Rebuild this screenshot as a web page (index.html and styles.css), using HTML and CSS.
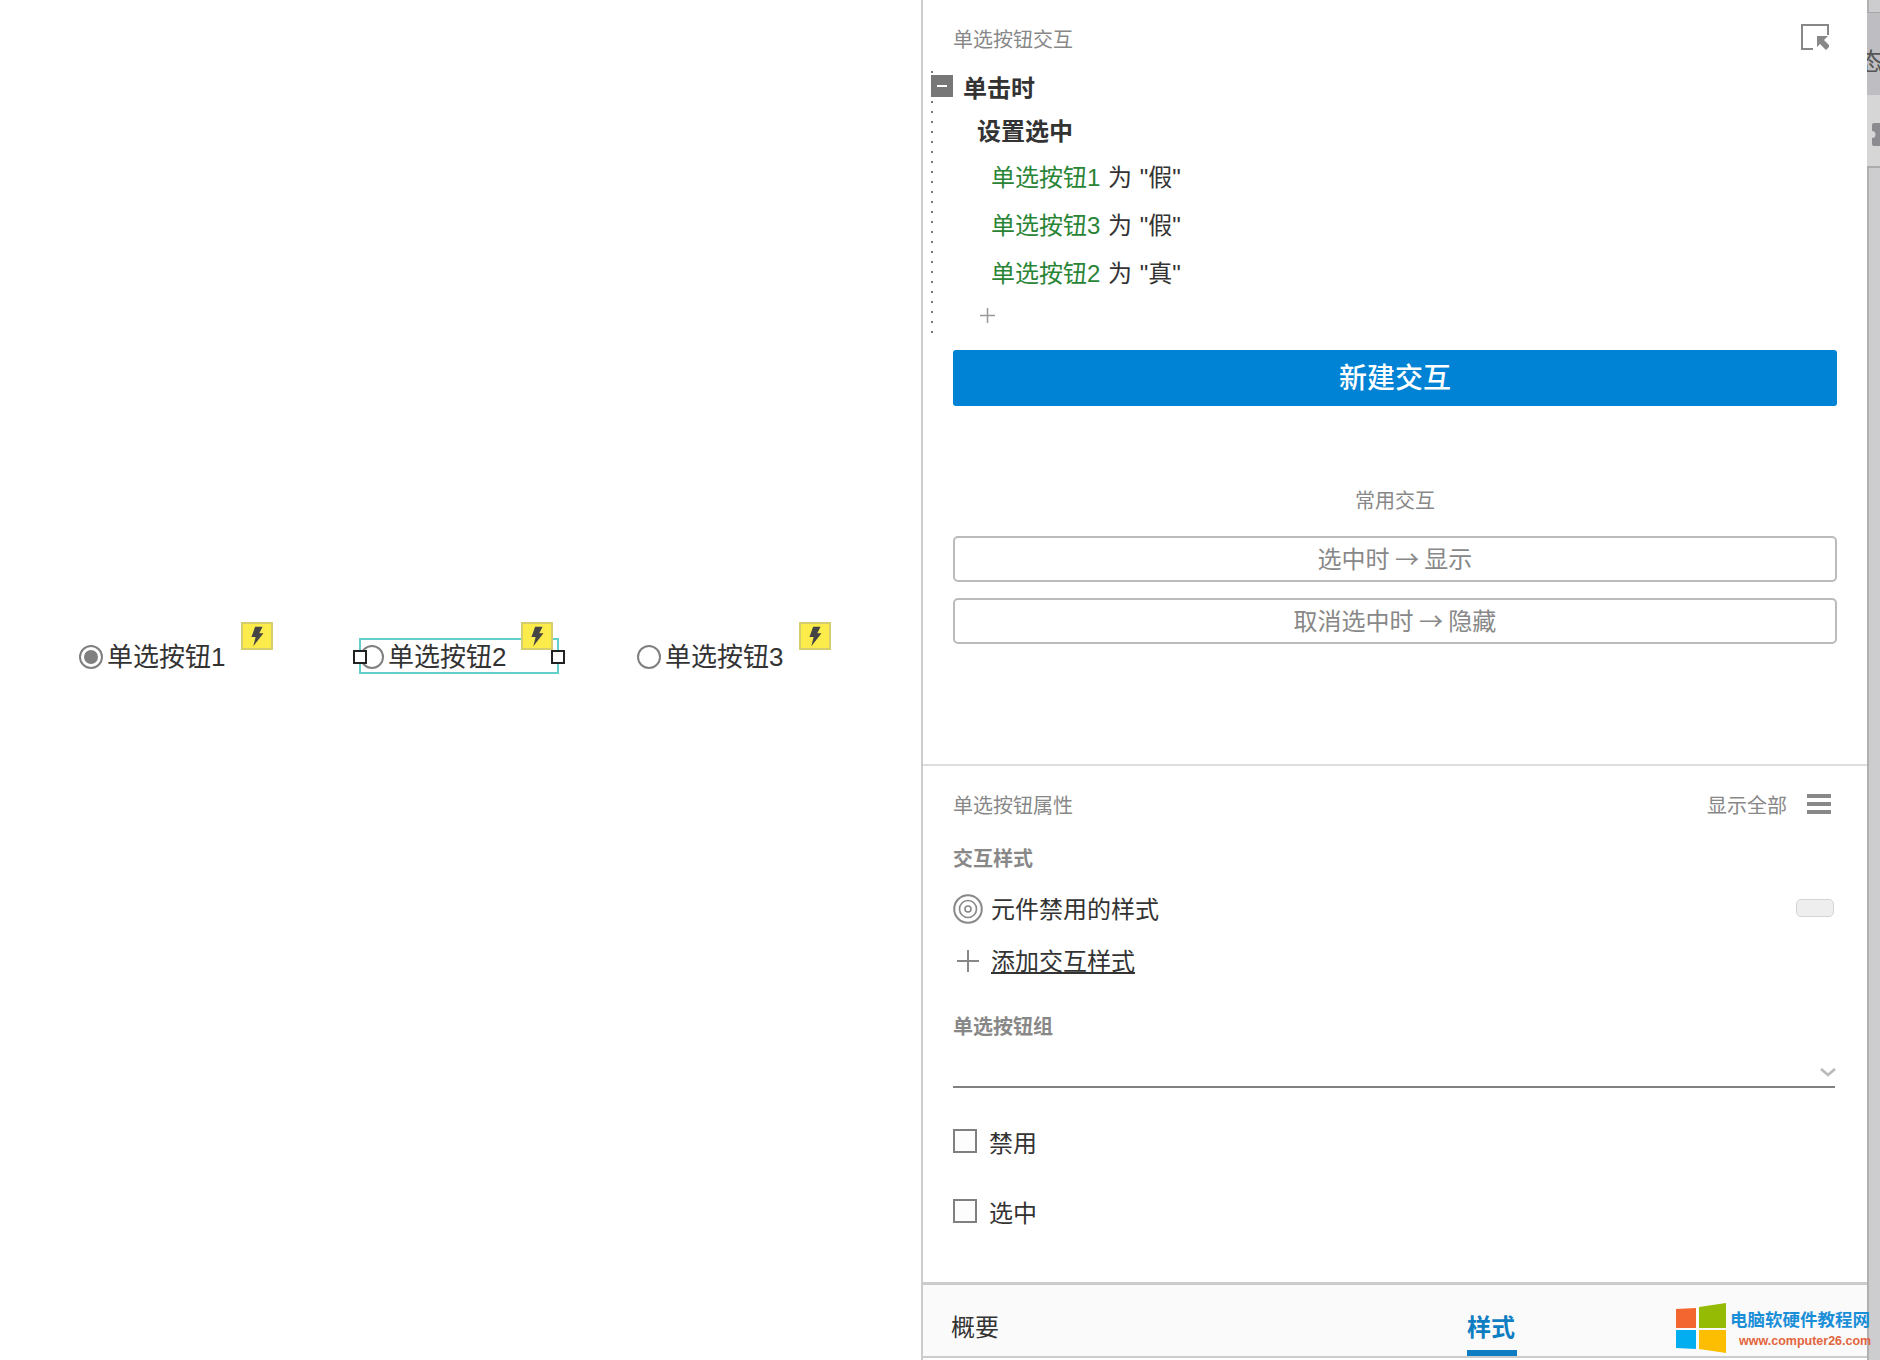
FILE: index.html
```html
<!DOCTYPE html>
<html>
<head>
    <title>单选按钮交互</title>
    <link rel="stylesheet" href="styles.css">
</head>
<body>
    <div class="canvas">
        <div class="widget w1">
            <span class="radio checked"></span><span class="radio-text">单选按钮1</span>
        </div>
        <div class="badge b1"><svg viewBox="0 0 30 26"><path d="M13 3h8l-3.500 7H22L11 24l2.500-10H9z"/></svg></div>

        <div class="widget w2">
            <span class="radio"></span><span class="radio-text">单选按钮2</span>
        </div>
        <div class="sel-box"></div>
        <div class="handle h-left"></div>
        <div class="handle h-right"></div>
        <div class="badge b2"><svg viewBox="0 0 30 26"><path d="M13 3h8l-3.500 7H22L11 24l2.500-10H9z"/></svg></div>

        <div class="widget w3">
            <span class="radio"></span><span class="radio-text">单选按钮3</span>
        </div>
        <div class="badge b3"><svg viewBox="0 0 30 26"><path d="M13 3h8l-3.500 7H22L11 24l2.500-10H9z"/></svg></div>
    </div>

    <div class="panel">
        <section class="inter">
            <div class="title-row">
                <span class="sec-title">单选按钮交互</span>
                <svg class="popout" viewBox="0 0 28 26">
                    <path d="M12 25H1V1h26v10" fill="none" stroke="#888" stroke-width="2"/>
                    <path d="M16 12h11l-4 4 6 6-4 4-6-6-3 3z" fill="#888"/>
                </svg>
            </div>

            <div class="tree">
                <div class="row-event"><span class="minus"></span>单击时</div>
                <div class="row-action">设置选中</div>
                <div class="row-item"><span class="green">单选按钮1</span> 为 "假"</div>
                <div class="row-item"><span class="green">单选按钮3</span> 为 "假"</div>
                <div class="row-item"><span class="green">单选按钮2</span> 为 "真"</div>
                <div class="row-add">
                    <svg width="17" height="17" viewBox="0 0 17 17"><path d="M8.500 1v15M1 8.500h15" stroke="#999" stroke-width="1.500"/></svg>
                </div>
            </div>

            <div class="btn-new">新建交互</div>
            <div class="common-title">常用交互</div>
            <div class="btn-outline first">选中时 → 显示</div>
            <div class="btn-outline">取消选中时 → 隐藏</div>
        </section>

        <section class="props">
            <div class="title-row props-title">
                <span class="sec-title">单选按钮属性</span>
                <span class="show-all">显示全部</span>
                <span class="burger"><i></i><i></i><i></i></span>
            </div>

            <div class="sub-title style-head">交互样式</div>
            <div class="style-row">
                <svg class="icon-col" width="30" height="30" viewBox="0 0 30 30">
                    <circle cx="15" cy="15" r="13.800" fill="none" stroke="#888" stroke-width="2"/>
                    <circle cx="15" cy="15" r="8.500" fill="none" stroke="#888" stroke-width="1.600"/>
                    <circle cx="15" cy="15" r="3" fill="none" stroke="#888" stroke-width="1.600"/>
                </svg>
                <span class="row-label">元件禁用的样式</span>
                <span class="pill"></span>
            </div>
            <div class="style-row add-row">
                <svg class="icon-col" width="30" height="24" viewBox="0 0 30 24"><path d="M15 1v22M4 12h22" stroke="#888" stroke-width="2"/></svg>
                <u class="row-label">添加交互样式</u>
            </div>

            <div class="sub-title group-head">单选按钮组</div>
            <div class="select">
                <svg width="18" height="11" viewBox="0 0 18 11"><path d="M2 2l7 6 7-6" fill="none" stroke="#bbb" stroke-width="2.800"/></svg>
            </div>

            <div class="check-row first"><span class="check"></span><span>禁用</span></div>
            <div class="check-row"><span class="check"></span><span>选中</span></div>
        </section>

        <div class="tabs">
            <div class="tab">概要</div>
            <div class="tab active">样式</div>
        </div>

        <div class="watermark">
            <svg width="50" height="50" viewBox="0 0 50 50">
                <path d="M0 6 20 5v20H0z" fill="#f4662f"/>
                <path d="M23 4 50 0v25H23z" fill="#95bb05"/>
                <path d="M0 27h20v19L0 45z" fill="#03aef0"/>
                <path d="M23 27h27v23l-27-4z" fill="#fdbd01"/>
            </svg>
            <div class="wm-text">
                <div class="wm-cn">电脑软硬件教程网</div>
                <div class="wm-url">www.computer26.com</div>
            </div>
        </div>
    </div>

    <div class="strip">
        <div class="strip-top"><span>态</span></div>
        <div class="strip-mid">
            <svg width="8" height="23" viewBox="0 0 8 23"><path d="M2 0h6v23H2a2 2 0 0 1-2-2v-6a3.500 3.500 0 0 0 0-7V2a2 2 0 0 1 2-2z" fill="#8C8C90"/></svg>
        </div>
    </div>
</body>
</html>
```

FILE: styles.css
```css
html, body {
    margin: 0;
    height: 100%;
}

body {
    display: flex;
    width: 1880px;
    height: 1360px;
    overflow: hidden;
    background-color: #FFFFFF;
    color: #333333;
    font-family: "Liberation Sans", "Noto Sans CJK SC", sans-serif;
    font-size: 24px;
}

/* canvas */
.canvas {
    position: relative;
    flex: none;
    width: 921px;
}

.widget {
    position: absolute;
    top: 638px;
    display: flex;
    align-items: center;
    height: 32px;
    font-size: 26px;
}

.w1 { left: 79px; }
.w2 { left: 360px; }
.w3 { left: 637px; }

.radio {
    box-sizing: border-box;
    display: flex;
    align-items: center;
    justify-content: center;
    width: 24px;
    height: 24px;
    margin-top: 6px;
    margin-right: 4px;
    border: 2px solid #808080;
    border-radius: 50%;
    background-color: #FFFFFF;
}

.checked::after {
    content: "";
    width: 14px;
    height: 14px;
    border-radius: 50%;
    background-color: #808080;
}

.sel-box {
    position: absolute;
    left: 359px;
    top: 638px;
    box-sizing: border-box;
    width: 200px;
    height: 36px;
    border: 2px solid #62CFC9;
}

.handle {
    position: absolute;
    top: 650px;
    box-sizing: border-box;
    width: 14px;
    height: 14px;
    border: 2px solid #222222;
    background-color: #FFFFFF;
}

.h-left { left: 353px; }
.h-right { left: 551px; }

.badge {
    position: absolute;
    top: 622px;
    box-sizing: border-box;
    width: 32px;
    height: 28px;
    border: 2px solid #D6CD6E;
    background-color: #FBEB4B;
}

.badge svg {
    display: block;
    width: 100%;
    height: 100%;
    fill: #444444;
}

.b1 { left: 241px; }
.b2 { left: 521px; }
.b3 { left: 799px; }

/* panel */
.panel {
    position: relative;
    flex: none;
    display: flex;
    flex-direction: column;
    width: 944px;
    border-left: 2px solid #CCCCCC;
}

.inter {
    box-sizing: border-box;
    height: 766px;
    padding: 24px 30px 0 30px;
    border-bottom: 2px solid #DDDDDD;
}

.title-row {
    position: relative;
    display: flex;
    align-items: center;
    height: 28px;
}

.sec-title {
    font-size: 20px;
    color: #888888;
}

.popout {
    position: absolute;
    right: 8px;
    top: 0;
    width: 28px;
    height: 26px;
}

.tree {
    margin: 16px 0 0 -22px;
    background-image: linear-gradient(#777777 2px, transparent 2px);
    background-size: 2px 10px;
    background-position: 0 33px;
    background-repeat: repeat-y;
}

.row-event {
    display: flex;
    align-items: center;
    height: 36px;
    font-size: 24px;
    font-weight: bold;
}

.minus {
    position: relative;
    flex: none;
    width: 22px;
    height: 22px;
    margin-right: 10px;
    background-color: #777777;
}

.minus::after {
    content: "";
    position: absolute;
    left: 6px;
    top: 10px;
    width: 10px;
    height: 2px;
    background-color: #FFFFFF;
}

.row-action {
    height: 40px;
    margin: 8px 0 0 46px;
    font-size: 24px;
    font-weight: bold;
    line-height: 40px;
}

.row-item {
    height: 48px;
    margin-left: 60px;
    line-height: 48px;
    word-spacing: 1px;
}

.row-action + .row-item {
    margin-top: 2px;
}

.green {
    color: #2A8436;
}

.row-add {
    display: flex;
    align-items: center;
    height: 36px;
    margin: 1px 0 0 48px;
    padding-bottom: 4px;
    box-sizing: border-box;
}

.btn-new {
    height: 56px;
    margin-top: 15px;
    border-radius: 3px;
    background-color: #0083D5;
    color: #FFFFFF;
    font-size: 28px;
    font-weight: 500;
    line-height: 58px;
    text-align: center;
}

.common-title {
    height: 28px;
    margin-top: 81px;
    font-size: 20px;
    line-height: 28px;
    color: #888888;
    text-align: center;
}

.btn-outline {
    box-sizing: border-box;
    height: 46px;
    margin-top: 16px;
    border: 2px solid #BBBBBB;
    border-radius: 5px;
    color: #888888;
    font-family: "Noto Sans CJK SC", sans-serif;
    line-height: 40px;
    text-align: center;
}

.btn-outline.first {
    margin-top: 21px;
}

.props {
    padding: 24px 30px 0 30px;
}

.props-title {
    padding-right: 6px;
}

.show-all {
    margin-left: auto;
    font-size: 20px;
    color: #888888;
}

.burger {
    display: flex;
    flex-direction: column;
    justify-content: space-between;
    width: 24px;
    height: 20px;
    margin-left: 20px;
}

.burger i {
    display: block;
    height: 4px;
    background-color: #888888;
}

.sub-title {
    height: 28px;
    font-size: 20px;
    font-weight: bold;
    line-height: 28px;
    color: #888888;
}

.style-head {
    margin-top: 27px;
}

.style-row {
    display: flex;
    align-items: center;
    height: 40px;
    margin-top: 16px;
}

.add-row {
    margin-top: 12px;
}

.icon-col {
    flex: none;
    margin-right: 8px;
}

.row-label {
    position: relative;
    top: -2px;
}

.pill {
    box-sizing: border-box;
    width: 38px;
    height: 18px;
    margin: -2px 3px 0 auto;
    border: 1px solid #D4D4D4;
    border-radius: 5px;
    background-color: #EEEEEE;
}

.group-head {
    margin-top: 32px;
}

.select {
    box-sizing: border-box;
    display: flex;
    justify-content: flex-end;
    align-items: flex-end;
    height: 47px;
    margin-right: 2px;
    padding: 0 0 8px 0;
    border-bottom: 2px solid #808080;
}

.select svg {
    margin-right: -2px;
}

.check-row {
    display: flex;
    align-items: center;
    height: 40px;
    margin-top: 30px;
}

.check-row.first {
    margin-top: 33px;
}

.check {
    box-sizing: border-box;
    flex: none;
    width: 24px;
    height: 24px;
    margin-right: 12px;
    border: 2px solid #808080;
    background-color: #FDFDFD;
}

.tabs {
    position: absolute;
    left: 0;
    right: 0;
    bottom: 0;
    box-sizing: border-box;
    display: flex;
    height: 78px;
    padding-left: 28px;
    border-top: 3px solid #CCCCCC;
    border-bottom: 2px solid #FFFFFF;
    box-shadow: inset 0 -2px 0 #CCCCCC;
    background-color: #FAFAFA;
}

.tab {
    width: 516px;
    height: 71px;
    line-height: 86px;
}

.tab.active {
    box-sizing: border-box;
    width: 50px;
    border-bottom: 6px solid #0F7DC2;
    color: #0F7DC2;
    font-weight: bold;
}

.watermark {
    position: absolute;
    z-index: 1;
    left: 753px;
    top: 1303px;
    display: flex;
    gap: 4px;
}

.wm-text {
    margin-top: 5px;
}

.wm-cn {
    font-size: 17.500px;
    font-weight: bold;
    line-height: 24px;
    color: #1A8FD8;
    white-space: nowrap;
}

.wm-url {
    margin: 1px 0 0 9px;
    font-size: 12.500px;
    font-weight: bold;
    line-height: 16px;
    color: #E2653D;
    white-space: nowrap;
}

/* right edge */
.strip {
    flex: none;
    width: 13px;
    overflow: hidden;
    background-color: #CDCDCF;
    box-shadow: inset 2px 0 0 #B0B0B0;
}

.strip-top {
    box-sizing: border-box;
    height: 83px;
    margin-top: 12px;
    border-top: 1px solid #A8A8A8;
    background-color: #BEBEC2;
    overflow: hidden;
}

.strip-top span {
    display: block;
    margin: 35px 0 0 -8px;
    color: #555555;
    font-size: 24px;
    line-height: 28px;
}

.strip-mid {
    box-sizing: border-box;
    height: 73px;
    padding: 28px 0 0 5px;
    border-bottom: 2px solid #ABABAB;
    background-color: #D6D6D6;
}

.strip-mid svg {
    display: block;
}
```
